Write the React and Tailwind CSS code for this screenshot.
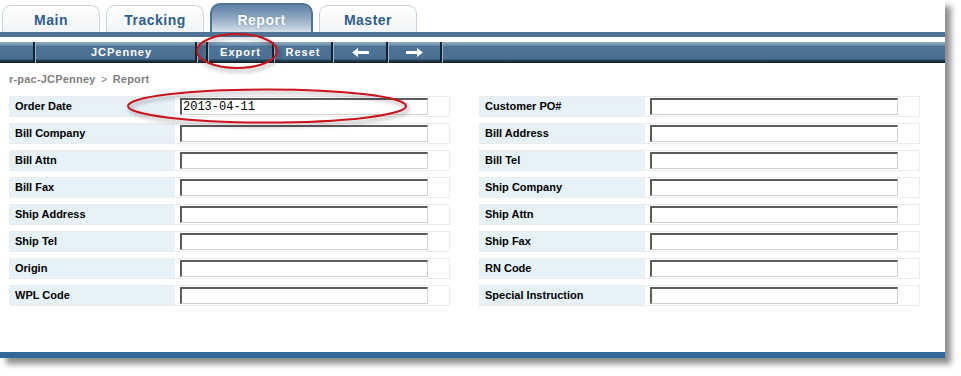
import React from "react";

const leftRows = [
  ["Order Date", "2013-04-11"],
  ["Bill Company", ""],
  ["Bill Attn", ""],
  ["Bill Fax", ""],
  ["Ship Address", ""],
  ["Ship Tel", ""],
  ["Origin", ""],
  ["WPL Code", ""],
];

const rightRows = [
  "Customer PO#",
  "Bill Address",
  "Bill Tel",
  "Ship Company",
  "Ship Attn",
  "Ship Fax",
  "RN Code",
  "Special Instruction",
];

const Tab = ({ label, active }) =>
  active ? (
    <div className="w-[103px] h-[30px] -mb-px rounded-t-[10px] border-2 border-b-0 border-[#4e7497] bg-gradient-to-b from-[#5f81a5] via-[#93abc4] to-[#dbe4ed] flex items-center justify-center pt-[2px] text-[14px] font-bold text-white tracking-[0.5px] [text-shadow:0_0_2px_#6a88a8]">
      {label}
    </div>
  ) : (
    <div className="w-[98px] h-[27px] rounded-t-[9px] border border-b-0 border-[#c9d2dc] bg-gradient-to-b from-white to-[#f1f4f7] flex items-center justify-center pt-[2px] text-[14px] font-bold text-[#2f5e8c] tracking-[0.5px]">
      {label}
    </div>
  );

const Sep = () => (
  <div className="w-[3px] h-full bg-[linear-gradient(to_right,#15222f_0,#15222f_2px,#9fb4c8_2px)]" />
);

const Seg = ({ w, children, className = "" }) => (
  <div
    className={`h-full flex items-center justify-center text-white font-bold text-[11px] tracking-[1px] ${w} ${className}`}
  >
    {children}
  </div>
);

const Arrow = ({ dir }) => (
  <svg width="17" height="9" viewBox="0 0 17 9">
    {dir === "left" ? (
      <path d="M0 4.5 L6 0 L6 3 L17 3 L17 6 L6 6 L6 9 Z" fill="white" />
    ) : (
      <path d="M17 4.5 L11 0 L11 3 L0 3 L0 6 L11 6 L11 9 Z" fill="white" />
    )}
  </svg>
);

const Field = ({ label, value }) => (
  <div className="flex h-[21px] border border-[#ececec] bg-white">
    <div className="w-[165px] h-full bg-[#e6f1f8] flex items-center pl-[5px] text-[11px] font-bold text-black">
      {label}
    </div>
    <div className="flex items-center pl-[5px]">
      <div className="w-[248px] h-[17px] bg-white border-t-2 border-l-2 border-r border-b border-t-[#5c5c5c] border-l-[#5c5c5c] border-r-[#d4d0c8] border-b-[#d4d0c8] flex items-center pl-[1px] font-['Liberation_Mono',monospace] text-[12px] text-black leading-none">
        {value}
      </div>
    </div>
  </div>
);

export default function App() {
  return (
    <div className="relative w-[961px] h-[376px] bg-white overflow-hidden font-['Liberation_Sans',Arial,sans-serif]">
      <div className="w-[945px] h-[358px] bg-white flex flex-col shadow-[6px_6px_6px_rgba(0,0,0,0.45)]">
        <div className="h-[32px] flex items-end gap-[6px] pl-[2px]">
          <Tab label="Main" />
          <Tab label="Tracking" />
          <Tab label="Report" active />
          <Tab label="Master" />
        </div>
        <div className="h-[5px] bg-[#4e7497]" />
        <div className="h-[5px] bg-white" />
        <div className="h-[21px] flex bg-[linear-gradient(to_bottom,#8ea8c1_0px,#7593b0_3px,#4e7497_4px,#4a6f93_17px,#2a435b_18px,#121c26_21px)]">
          <Seg w="w-[33px]" />
          <Sep />
          <Seg w="w-[159px]" className="pl-[12px]">
            JCPenney
          </Seg>
          <Sep />
          <Seg w="w-[8px]" />
          <Sep />
          <Seg w="w-[63px]">Export</Seg>
          <Sep />
          <Seg w="w-[56px]">Reset</Seg>
          <Sep />
          <Seg w="w-[52px]">
            <Arrow dir="left" />
          </Seg>
          <Sep />
          <Seg w="w-[51px]">
            <Arrow dir="right" />
          </Seg>
          <Sep />
          <Seg w="flex-1" />
        </div>
        <div className="h-[33px] pl-[9px] pt-[8px] text-[11px] font-bold text-[#808080] tracking-[0.2px]">
          r-pac-JCPenney <span className="font-normal mx-[2px]">&gt;</span> Report
        </div>
        <div className="pl-[9px] grid grid-cols-[441px_441px] gap-x-[29px] gap-y-[6px]">
          {leftRows.map(([label, value], i) => (
            <React.Fragment key={label}>
              <Field label={label} value={value} />
              <Field label={rightRows[i]} value="" />
            </React.Fragment>
          ))}
        </div>
        <div className="flex-1" />
        <div className="h-[6px] bg-[#336699]" />
      </div>

      <svg
        className="absolute left-0 top-0 pointer-events-none"
        width="961"
        height="376"
        viewBox="0 0 961 376"
      >
        <defs>
          <filter id="sh" x="-20%" y="-40%" width="140%" height="180%">
            <feDropShadow dx="2" dy="3" stdDeviation="2" floodColor="#000" floodOpacity="0.35" />
          </filter>
        </defs>
        <ellipse
          cx="237"
          cy="51"
          rx="40"
          ry="17"
          fill="none"
          stroke="#c8141c"
          strokeWidth="2"
          filter="url(#sh)"
        />
        <ellipse
          cx="267"
          cy="106"
          rx="139"
          ry="16.5"
          fill="none"
          stroke="#c8141c"
          strokeWidth="2"
          filter="url(#sh)"
        />
      </svg>
    </div>
  );
}
